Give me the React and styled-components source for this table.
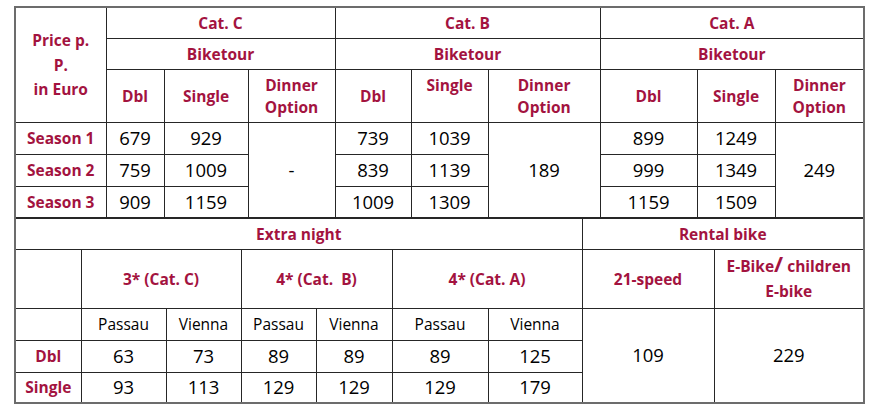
import styled, { createGlobalStyle } from "styled-components";

const Global = createGlobalStyle`
  html, body { margin: 0; padding: 0; background: #fff; }
  body { font-family: "Open Sans", "Liberation Sans", sans-serif; }
`;

const Page = styled.div`
  padding: 6px 0 0 14px;
`;

const Sheet = styled.div`
  width: 849px;
  display: flex;
  flex-direction: column;
`;

const Table = styled.table`
  width: 849px;
  table-layout: fixed;
  border-collapse: collapse;
  border: 2px solid #6c6c6c;
  border-top: ${(p) => (p.$joined ? "none" : "2px solid #6c6c6c")};
  border-bottom: ${(p) => (p.$open ? "none" : "2px solid #6c6c6c")};
`;

const Col = styled.col`
  width: ${(p) => p.$w}px;
`;

const Row = styled.tr`
  height: ${(p) => p.$h}px;
`;

const Cell = styled.td`
  border: 1px solid #262626;
  padding: 0 2px;
  text-align: center;
  vertical-align: ${(p) => (p.$top ? "top" : "middle")};
  padding-top: ${(p) => (p.$top ? "4px" : "0")};
  color: #000;
  font-size: 18.5px;
  font-weight: 400;
  line-height: 22px;
  white-space: pre;
`;

const Head = styled(Cell)`
  color: #a3133f;
  font-size: 15.5px;
  font-weight: 700;
  line-height: ${(p) => (p.$tall ? "24.5px" : "22px")};
`;

const Place = styled(Cell)`
  font-size: 15.5px;
`;

const Slash = styled.span`
  font-size: 22px;
  font-weight: 700;
  line-height: 0;
`;

const topCols = [91, 58, 84, 87, 76, 77, 112, 97, 78, 89];
const bottomCols = [66, 85, 75, 75, 76, 96, 94, 132, 150];

const seasons = [
  ["Season 1", "679", "929", "739", "1039", "899", "1249"],
  ["Season 2", "759", "1009", "839", "1139", "999", "1349"],
  ["Season 3", "909", "1159", "1009", "1309", "1159", "1509"],
];

const dinner = ["-", "189", "249"];

const nights = [
  ["Dbl", "63", "73", "89", "89", "89", "125"],
  ["Single", "93", "113", "129", "129", "129", "179"],
];

export default function App() {
  return (
    <Page>
      <Global />
      <Sheet>
        <Table $open>
          <colgroup>
            {topCols.map((w, i) => (
              <Col key={i} $w={w} />
            ))}
          </colgroup>
          <tbody>
            <Row $h={31}>
              <Head rowSpan={3} $tall>
                Price p.{"\n"}P.{"\n"}in Euro
              </Head>
              <Head colSpan={3}>Cat. C</Head>
              <Head colSpan={3}>Cat. B</Head>
              <Head colSpan={3}>Cat. A</Head>
            </Row>
            <Row $h={31}>
              <Head colSpan={3}>Biketour</Head>
              <Head colSpan={3}>Biketour</Head>
              <Head colSpan={3}>Biketour</Head>
            </Row>
            <Row $h={53}>
              <Head>Dbl</Head>
              <Head>Single</Head>
              <Head>Dinner{"\n"}Option</Head>
              <Head>Dbl</Head>
              <Head $top>Single</Head>
              <Head>Dinner{"\n"}Option</Head>
              <Head>Dbl</Head>
              <Head>Single</Head>
              <Head>Dinner{"\n"}Option</Head>
            </Row>
            {seasons.map((s, r) => (
              <Row key={s[0]} $h={r === 2 ? 31 : 32}>
                <Head>{s[0]}</Head>
                <Cell>{s[1]}</Cell>
                <Cell>{s[2]}</Cell>
                {r === 0 && <Cell rowSpan={3}>{dinner[0]}</Cell>}
                <Cell>{s[3]}</Cell>
                <Cell>{s[4]}</Cell>
                {r === 0 && <Cell rowSpan={3}>{dinner[1]}</Cell>}
                <Cell>{s[5]}</Cell>
                <Cell>{s[6]}</Cell>
                {r === 0 && <Cell rowSpan={3}>{dinner[2]}</Cell>}
              </Row>
            ))}
          </tbody>
        </Table>
        <Table $joined>
          <colgroup>
            {bottomCols.map((w, i) => (
              <Col key={i} $w={w} />
            ))}
          </colgroup>
          <tbody>
            <Row $h={31}>
              <Head colSpan={7}>Extra night</Head>
              <Head colSpan={2}>Rental bike</Head>
            </Row>
            <Row $h={59}>
              <Head />
              <Head colSpan={2}>3* (Cat. C)</Head>
              <Head colSpan={2}>4* (Cat.  B)</Head>
              <Head colSpan={2}>4* (Cat. A)</Head>
              <Head>21-speed</Head>
              <Head $tall>
                E-Bike<Slash>/</Slash> children{"\n"}E-bike
              </Head>
            </Row>
            <Row $h={32}>
              <Place />
              <Place>Passau</Place>
              <Place>Vienna</Place>
              <Place>Passau</Place>
              <Place>Vienna</Place>
              <Place>Passau</Place>
              <Place>Vienna</Place>
              <Cell rowSpan={3}>109</Cell>
              <Cell rowSpan={3}>229</Cell>
            </Row>
            {nights.map((n, r) => (
              <Row key={n[0]} $h={r === 0 ? 32 : 31}>
                <Head>{n[0]}</Head>
                {n.slice(1).map((v, i) => (
                  <Cell key={i}>{v}</Cell>
                ))}
              </Row>
            ))}
          </tbody>
        </Table>
      </Sheet>
    </Page>
  );
}
